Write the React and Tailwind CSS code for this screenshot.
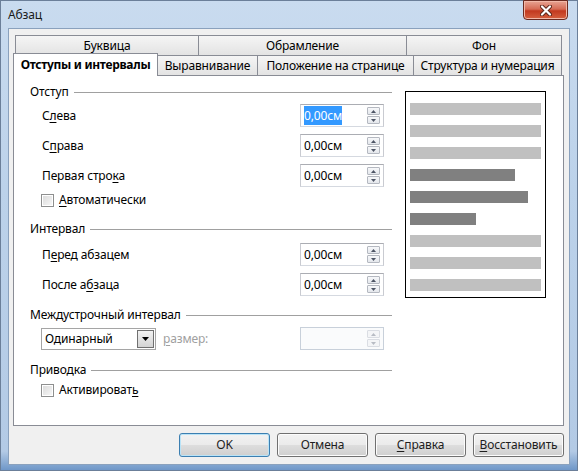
import React from 'react';

const FONT = { fontFamily: '"Noto Sans", "Open Sans", sans-serif' };

const U = ({ children }) => <span className="underline underline-offset-[2px]">{children}</span>;

const ArrowUp = ({ color }) => (
  <svg width="5" height="3" viewBox="0 0 5 3"><path d="M0 3 L2.5 0 L5 3 Z" fill={color} /></svg>
);
const ArrowDown = ({ color }) => (
  <svg width="5" height="3" viewBox="0 0 5 3"><path d="M0 0 L2.5 3 L5 0 Z" fill={color} /></svg>
);

const SpinButtons = ({ disabled }) => {
  const arrow = disabled ? '#b8bcc4' : '#4d5565';
  const btn = `flex items-center justify-center w-[13px] h-[8px] border ${
    disabled ? 'border-[#dadde3] bg-[#f4f5f7]' : 'border-[#b4b8c0] bg-gradient-to-b from-[#f7f8fa] to-[#e4e7ec]'
  } rounded-[1px]`;
  return (
    <div className="flex flex-col gap-[1px]">
      <div className={btn}><ArrowUp color={arrow} /></div>
      <div className={btn}><ArrowDown color={arrow} /></div>
    </div>
  );
};

const Spin = ({ value, selected, disabled }) => (
  <div
    className={`flex items-center h-[23px] w-[84px] border pl-[3px] pr-[3px] ${
      disabled ? 'border-[#c8d0da] bg-[#fafbfc]' : 'border-[#abadb3] border-t-[#abadb3] border-l-[#c9cbd1] border-r-[#c9cbd1] border-b-[#d5d9e0] bg-white'
    }`}
  >
    <div className="flex-1 text-[12px] leading-[16px] text-black">
      {value && <span className={selected ? 'bg-[#3399ff] text-white py-[1px]' : ''}>{value}</span>}
    </div>
    <SpinButtons disabled={disabled} />
  </div>
);

const Checkbox = ({ children }) => (
  <div className="flex items-center h-[16px] pl-[11px] gap-[5px]">
    <div className="w-[13px] h-[13px] border border-[#8e8f8f] bg-white p-[1px]">
      <div className="w-full h-full bg-gradient-to-br from-[#dcdcdc] to-[#f6f6f6]" />
    </div>
    <span className="text-[12px] leading-[16px]">{children}</span>
  </div>
);

const GroupHeader = ({ children, className = '' }) => (
  <div className={`flex items-center h-[16px] ${className}`}>
    <span className="text-[12px] leading-[16px] whitespace-nowrap">{children}</span>
    <div className="flex-1 h-px bg-[#a0a0a0] ml-[5px] mt-[1px]" />
  </div>
);

const Row = ({ label, className = '', children }) => (
  <div className={`flex items-center justify-between w-[354px] pl-[12px] ${className}`}>
    <span className="text-[12px] leading-[16px]">{label}</span>
    {children}
  </div>
);

const Button = ({ children, primary }) => (
  <div
    className={`w-[91px] h-[24px] flex items-center justify-center rounded-[3px] border text-[12px] text-[#1e1e1e] ${
      primary ? 'border-[#3c7fb1] shadow-[inset_0_0_0_1px_#b9e3f7]' : 'border-[#707070] shadow-[inset_0_0_0_1px_#fcfcfc]'
    } bg-[linear-gradient(to_bottom,#f2f2f2_0%,#ebebeb_48%,#dddddd_52%,#cfcfcf_100%)]`}
  >
    {children}
  </div>
);

const Bar = ({ w, dark }) => (
  <div className={`h-[12px] ${dark ? 'bg-[#808080]' : 'bg-[#c0c0c0]'} ${w}`} />
);

const tabBg = 'bg-gradient-to-b from-[#f5f5f5] to-[#e3e3e3]';

export default function App() {
  return (
    <div
      style={FONT}
      className="relative w-[578px] h-[471px] flex flex-col text-black tracking-[-0.15px] bg-[linear-gradient(to_bottom,#c9dbef_0%,#bcd2ea_40%,#b3cae5_96%,#6f97c8_100%)] border border-[#6b7f99]"
    >
      {/* Title bar */}
      <div className="h-[27px] flex items-center pl-[7px]">
        <span className="text-[12px] leading-[16px] text-[#1a1a1a]">Абзац</span>
      </div>
      <div className="absolute right-[9px] top-[-1px] w-[45px] h-[20px] rounded-b-[4px] border border-[#6b2a20] bg-[linear-gradient(to_bottom,#e8a493_0%,#d66b55_45%,#c2391f_55%,#d5603f_100%)] flex items-center justify-center shadow-[inset_0_0_0_1px_#f2b8a8]">
        <svg width="12" height="11" viewBox="0 0 12 11">
          <path d="M2 1.5 L10 9.5 M10 1.5 L2 9.5" stroke="#5a2418" strokeWidth="4" strokeLinecap="round" />
          <path d="M2 1.5 L10 9.5 M10 1.5 L2 9.5" stroke="#ffffff" strokeWidth="2.2" strokeLinecap="round" />
        </svg>
      </div>

      {/* Client area */}
      <div className="flex-1 mx-[7px] mb-[5px] border border-[#8aa1bd] bg-[#f0f0f0] px-[4px] pt-[6px] flex flex-col">
        {/* Back tab row */}
        <div className="flex ml-[2px] h-[20px] text-[12px] leading-[16px]">
          <div className={`w-[184px] border border-b-0 border-[#898c95] ${tabBg} flex items-center justify-center`}>Буквица</div>
          <div className={`w-[208px] border border-b-0 border-l-0 border-[#898c95] ${tabBg} flex items-center justify-center`}>Обрамление</div>
          <div className={`w-[155px] border border-b-0 border-l-0 border-[#898c95] ${tabBg} flex items-center justify-center`}>Фон</div>
        </div>
        {/* Front tab row */}
        <div className="flex items-end h-[22px] -mt-[2px] text-[12px] leading-[16px] relative z-10">
          <div className="w-[145px] h-[23px] -mb-px border border-b-0 border-[#898c95] bg-white flex items-center justify-center font-bold pb-[1px] tracking-[-0.3px]">Отступы и интервалы</div>
          <div className={`w-[100px] h-[20px] border border-b-0 border-l-0 border-[#898c95] ${tabBg} flex items-center justify-center`}>Выравнивание</div>
          <div className={`w-[156px] h-[20px] border border-b-0 border-l-0 border-[#898c95] ${tabBg} flex items-center justify-center`}>Положение на странице</div>
          <div className={`w-[148px] h-[20px] border border-b-0 border-l-0 border-[#898c95] ${tabBg} flex items-center justify-center`}>Структура и нумерация</div>
        </div>

        {/* Tab panel */}
        <div className="w-[551px] h-[351px] border border-[#898c95] bg-white flex pl-[16px] pt-[8px]">
          <div className="w-[362px] flex flex-col">
            <GroupHeader>Отступ</GroupHeader>
            <Row className="mt-[4px]" label={<>С<U>л</U>ева</>}>
              <Spin value="0,00см" selected />
            </Row>
            <Row className="mt-[7px]" label={<>С<U>п</U>рава</>}>
              <Spin value="0,00см" />
            </Row>
            <Row className="mt-[7px]" label={<>Первая стро<U>к</U>а</>}>
              <Spin value="0,00см" />
            </Row>
            <div className="mt-[5px]">
              <Checkbox><U>А</U>втоматически</Checkbox>
            </div>

            <GroupHeader className="mt-[13px]">Интервал</GroupHeader>
            <Row className="mt-[6px]" label={<>П<U>е</U>ред абзацем</>}>
              <Spin value="0,00см" />
            </Row>
            <Row className="mt-[7px]" label={<>После а<U>б</U>заца</>}>
              <Spin value="0,00см" />
            </Row>

            <GroupHeader className="mt-[11px]">Междустрочный интервал</GroupHeader>
            <div className="mt-[4px] flex items-center w-[354px] pl-[11px]">
              <div className="w-[115px] h-[22px] border border-[#a5a5a5] bg-white flex items-center pl-[3px] pr-[1px]">
                <span className="flex-1 text-[12px] leading-[16px]">Одинарный</span>
                <div className="w-[17px] h-[18px] border border-[#707070] bg-gradient-to-b from-[#f2f2f2] to-[#d4d4d4] flex items-center justify-center">
                  <svg width="7" height="4" viewBox="0 0 7 4"><path d="M0 0 L3.5 4 L7 0 Z" fill="#000" /></svg>
                </div>
              </div>
              <span className="ml-[7px] text-[12px] leading-[16px] text-[#a0a0a0]"><U>р</U>азмер:</span>
              <div className="ml-auto">
                <Spin disabled />
              </div>
            </div>

            <GroupHeader className="mt-[12px]">Приводка</GroupHeader>
            <div className="mt-[4px]">
              <Checkbox>Активироват<U>ь</U></Checkbox>
            </div>
          </div>

          {/* Preview */}
          <div className="ml-[13px] mt-[7px] w-[141px] h-[207px] border border-black bg-white pl-[4px] pt-[11px] flex flex-col gap-[10px]">
            <Bar w="w-[131px]" />
            <Bar w="w-[131px]" />
            <Bar w="w-[131px]" />
            <Bar w="w-[105px]" dark />
            <Bar w="w-[118px]" dark />
            <Bar w="w-[66px]" dark />
            <Bar w="w-[131px]" />
            <Bar w="w-[131px]" />
            <Bar w="w-[131px]" />
          </div>
        </div>

        {/* Buttons */}
        <div className="flex justify-end gap-[7px] mt-[7px] pr-[1px]">
          <Button primary>OK</Button>
          <Button>Отмена</Button>
          <Button><U>С</U>правка</Button>
          <Button><U>В</U>осстановить</Button>
        </div>
      </div>
    </div>
  );
}
